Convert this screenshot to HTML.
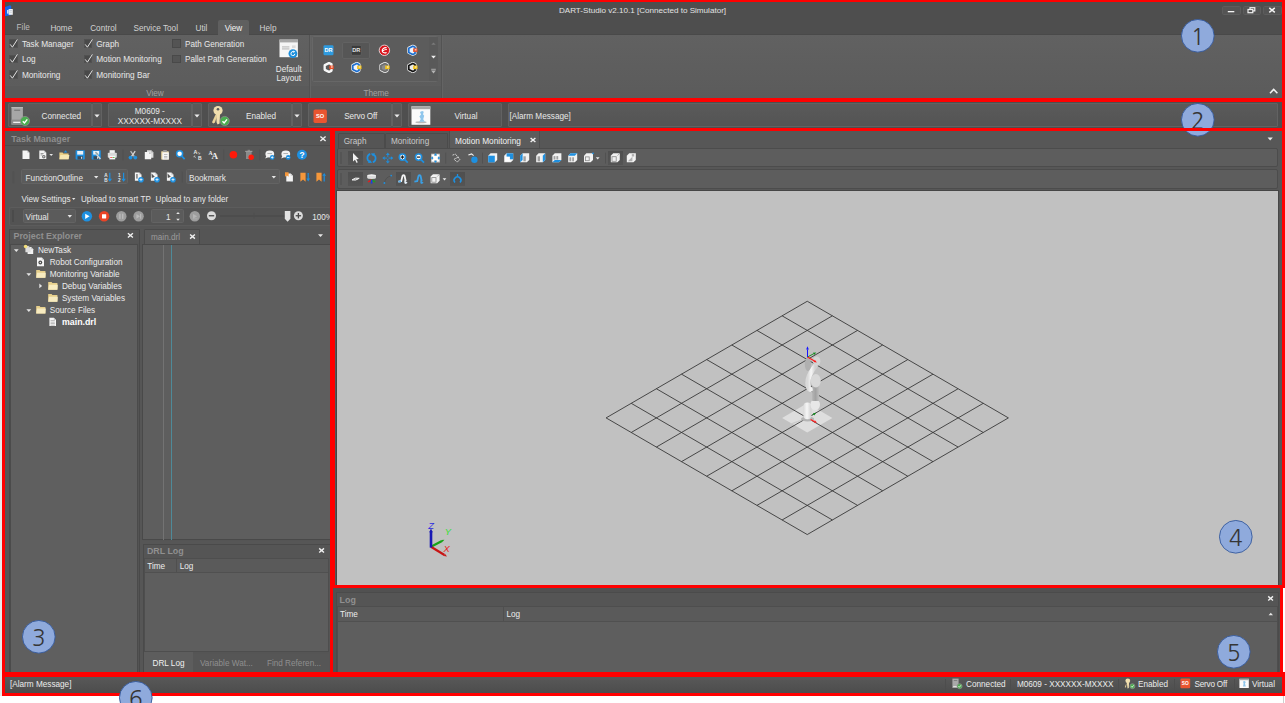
<!DOCTYPE html>
<html><head><meta charset="utf-8"><title>DART-Studio</title>
<style>
html,body{margin:0;padding:0;}
body{width:1285px;height:703px;overflow:hidden;background:#fff;position:relative;font-family:"Liberation Sans",Arial,sans-serif;}
#app{position:absolute;left:0;top:0;width:1285px;height:703px;overflow:hidden;}
#app div,#app svg{position:absolute;}
.t{white-space:nowrap;}
.red{background:#ff0000;}
</style></head><body><div id="app">
<div style="left:0px;top:0px;width:2px;height:703px;background:#e6eaea;"></div>
<div style="left:2px;top:0px;width:1283px;height:696px;background:#575757;"></div>
<div style="left:2px;top:0px;width:1283px;height:34.5px;background:#4e4e4e;"></div>
<div style="left:2px;top:34.5px;width:1283px;height:64px;background:linear-gradient(#616161,#5b5b5b);"></div>
<div style="left:2px;top:33.5px;width:1283px;height:1px;background:#494949;"></div>
<div style="left:218px;top:19.5px;width:31px;height:15px;background:#5f5f5f;border-radius:2px 2px 0 0;"></div>
<div style="left:5px;top:85px;width:437px;height:13px;background:#5a5a5a;"></div>
<div style="left:5px;top:85px;width:437px;height:1px;background:#5d5d5d;"></div>
<svg style="left:4px;top:4px;" width="12" height="13" viewBox="0 0 12 13"><path d="M1 3 L6 1.2 L7.2 2 L7.2 11 L1 12.2 Z" fill="#1565e8"/><rect x="4.6" y="5" width="4.2" height="5.8" fill="#f2f2f2"/><rect x="3.2" y="6" width="1.2" height="3.6" fill="#fff"/><rect x="5.5" y="6.2" width="2.4" height="0.7" fill="#b9c3d4"/><rect x="5.5" y="7.8" width="2.4" height="0.7" fill="#b9c3d4"/></svg>
<div class="t" style="top:4.50px;font-size:8.1px;line-height:12px;color:#e2e2e2;left:442.5px;width:400px;text-align:center;">DART-Studio v2.10.1 [Connected to Simulator]</div>
<div style="left:1222px;top:5.5px;width:18.5px;height:9.5px;background:#545454;border:1px solid #5d5d5d;box-sizing:border-box;border-radius:1.5px;"></div>
<div style="left:1242.5px;top:5.5px;width:18.5px;height:9.5px;background:#545454;border:1px solid #5d5d5d;box-sizing:border-box;border-radius:1.5px;"></div>
<div style="left:1263px;top:5.5px;width:18.5px;height:9.5px;background:#545454;border:1px solid #5d5d5d;box-sizing:border-box;border-radius:1.5px;"></div>
<svg style="left:1222px;top:5px;" width="62" height="11" viewBox="0 0 62 11"><rect x="5.8" y="6" width="6.5" height="1.3" fill="#f4f4f4"/><rect x="28" y="2.7" width="4.8" height="3.2" fill="none" stroke="#f0f0f0" stroke-width="1.2"/><rect x="26" y="4.5" width="4.8" height="3.2" fill="#545454" stroke="#f0f0f0" stroke-width="1.2"/><path d="M47.3 2.8 L52.8 7.4 M52.8 2.8 L47.3 7.4" stroke="#f4f4f4" stroke-width="1.5"/></svg>
<div class="t" style="top:21.70px;font-size:8.2px;line-height:12px;color:#bcbcbc;left:16.6px;">File</div>
<div class="t" style="top:22.80px;font-size:8.2px;line-height:12px;color:#d2d2d2;left:50.4px;">Home</div>
<div class="t" style="top:22.80px;font-size:8.2px;line-height:12px;color:#d2d2d2;left:90.2px;">Control</div>
<div class="t" style="top:22.80px;font-size:8.2px;line-height:12px;color:#d2d2d2;left:133.5px;">Service Tool</div>
<div class="t" style="top:22.80px;font-size:8.2px;line-height:12px;color:#d2d2d2;left:195.6px;">Util</div>
<div class="t" style="top:22.80px;font-size:8.2px;line-height:12px;color:#f4f4f4;left:224.7px;">View</div>
<div class="t" style="top:22.80px;font-size:8.2px;line-height:12px;color:#d2d2d2;left:259.6px;">Help</div>
<div style="left:9px;top:39.4px;width:8.6px;height:8.8px;background:#494949;border:1px solid #515151;box-sizing:border-box;"></div>
<svg style="left:8px;top:37.9px;" width="12" height="12" viewBox="0 0 12 12"><path d="M2.2 6.4 L4.4 9.2 L9.4 1.4" fill="none" stroke="#e0e0e0" stroke-width="1.0"/></svg>
<div class="t" style="top:39.10px;font-size:8.25px;line-height:12px;color:#e8e8e8;left:21.9px;">Task Manager</div>
<div style="left:9px;top:54.7px;width:8.6px;height:8.8px;background:#494949;border:1px solid #515151;box-sizing:border-box;"></div>
<svg style="left:8px;top:53.2px;" width="12" height="12" viewBox="0 0 12 12"><path d="M2.2 6.4 L4.4 9.2 L9.4 1.4" fill="none" stroke="#e0e0e0" stroke-width="1.0"/></svg>
<div class="t" style="top:54.40px;font-size:8.25px;line-height:12px;color:#e8e8e8;left:21.9px;">Log</div>
<div style="left:9px;top:70.2px;width:8.6px;height:8.8px;background:#494949;border:1px solid #515151;box-sizing:border-box;"></div>
<svg style="left:8px;top:68.7px;" width="12" height="12" viewBox="0 0 12 12"><path d="M2.2 6.4 L4.4 9.2 L9.4 1.4" fill="none" stroke="#e0e0e0" stroke-width="1.0"/></svg>
<div class="t" style="top:69.90px;font-size:8.25px;line-height:12px;color:#e8e8e8;left:21.9px;">Monitoring</div>
<div style="left:83.5px;top:39.4px;width:8.6px;height:8.8px;background:#494949;border:1px solid #515151;box-sizing:border-box;"></div>
<svg style="left:82.5px;top:37.9px;" width="12" height="12" viewBox="0 0 12 12"><path d="M2.2 6.4 L4.4 9.2 L9.4 1.4" fill="none" stroke="#e0e0e0" stroke-width="1.0"/></svg>
<div class="t" style="top:39.10px;font-size:8.25px;line-height:12px;color:#e8e8e8;left:96.2px;">Graph</div>
<div style="left:83.5px;top:54.7px;width:8.6px;height:8.8px;background:#494949;border:1px solid #515151;box-sizing:border-box;"></div>
<svg style="left:82.5px;top:53.2px;" width="12" height="12" viewBox="0 0 12 12"><path d="M2.2 6.4 L4.4 9.2 L9.4 1.4" fill="none" stroke="#e0e0e0" stroke-width="1.0"/></svg>
<div class="t" style="top:54.40px;font-size:8.25px;line-height:12px;color:#e8e8e8;left:96.2px;">Motion Monitoring</div>
<div style="left:83.5px;top:70.2px;width:8.6px;height:8.8px;background:#494949;border:1px solid #515151;box-sizing:border-box;"></div>
<svg style="left:82.5px;top:68.7px;" width="12" height="12" viewBox="0 0 12 12"><path d="M2.2 6.4 L4.4 9.2 L9.4 1.4" fill="none" stroke="#e0e0e0" stroke-width="1.0"/></svg>
<div class="t" style="top:69.90px;font-size:8.25px;line-height:12px;color:#e8e8e8;left:96.2px;">Monitoring Bar</div>
<div style="left:172.3px;top:39.4px;width:8.6px;height:8.8px;background:#545454;border:1px solid #494949;box-sizing:border-box;"></div>
<div class="t" style="top:39.10px;font-size:8.15px;line-height:12px;color:#e8e8e8;left:185px;">Path Generation</div>
<div style="left:172.3px;top:54.7px;width:8.6px;height:8.8px;background:#545454;border:1px solid #494949;box-sizing:border-box;"></div>
<div class="t" style="top:54.40px;font-size:8.15px;line-height:12px;color:#e8e8e8;left:185px;">Pallet Path Generation</div>
<svg style="left:279px;top:39px;" width="20" height="20" viewBox="0 0 20 20"><rect x="0.5" y="0.6" width="18.4" height="17.6" fill="#f6f6f6"/><rect x="0.5" y="0.6" width="18.4" height="2.8" fill="#a8a8a8"/><rect x="3" y="7.6" width="7.4" height="0.7" fill="#9a9a9a"/><rect x="3" y="9.6" width="7.4" height="0.7" fill="#9a9a9a"/><rect x="13" y="6.4" width="3.6" height="2.6" fill="#dcdcdc"/><circle cx="13.9" cy="14.6" r="4.4" fill="#1b8fdd"/><path d="M15.9 14.8 A2 2 0 1 1 14.6 12.7" fill="none" stroke="#fff" stroke-width="1"/><path d="M14.2 11.6 L16.2 12.6 L14.4 14 Z" fill="#fff"/></svg>
<div class="t" style="top:63.80px;font-size:8.2px;line-height:12px;color:#e8e8e8;left:258.8px;width:60px;text-align:center;">Default</div>
<div class="t" style="top:73.10px;font-size:8.2px;line-height:12px;color:#e8e8e8;left:258.8px;width:60px;text-align:center;">Layout</div>
<div class="t" style="top:88.30px;font-size:8.2px;line-height:12px;color:#a2a2a2;left:125.0px;width:60px;text-align:center;">View</div>
<div class="t" style="top:88.30px;font-size:8.2px;line-height:12px;color:#a2a2a2;left:346.2px;width:60px;text-align:center;">Theme</div>
<div style="left:309px;top:35px;width:1px;height:63px;background:#535353;"></div>
<div style="left:310px;top:35px;width:1px;height:63px;background:#646464;"></div>
<div style="left:441px;top:35px;width:1px;height:63px;background:#535353;"></div>
<div style="left:442px;top:35px;width:1px;height:63px;background:#646464;"></div>
<div style="left:312px;top:36px;width:126px;height:45.5px;background:#5c5c5c;border:1px solid #676767;box-sizing:border-box;border-radius:1.5px;"></div>
<div style="left:428.5px;top:37px;width:9px;height:43.5px;background:#595959;"></div>
<div style="left:342.3px;top:41.5px;width:27.7px;height:17px;background:#565656;border:1px solid #626262;box-sizing:border-box;border-radius:2px;"></div>
<svg style="left:428.5px;top:37px;" width="9" height="44" viewBox="0 0 9 44"><path d="M2.3 7.8 L4.5 5.4 L6.7 7.8 Z" fill="#7a7a7a"/><path d="M2.1 18.8 L6.9 18.8 L4.5 21.6 Z" fill="#ededed"/><rect x="2.2" y="31.8" width="4.6" height="0.9" fill="#b4b4b4"/><path d="M2.1 33.4 L6.9 33.4 L4.5 36.4 Z" fill="#b4b4b4"/></svg>
<svg style="left:0px;top:0px;" width="450" height="98" viewBox="0 0 450 98"><rect x="323.5" y="45.3" width="10" height="10" rx="1.2" fill="#2e9be0"/><text x="328.5" y="52.4" font-size="5.6" font-weight="700" text-anchor="middle" fill="#fff" font-family='"Liberation Sans", Arial, sans-serif'>DR</text><rect x="351.3" y="45.3" width="10" height="10" rx="1.2" fill="#3b3b3b" stroke="#6a6a6a" stroke-width="0.6"/><text x="356.3" y="52.4" font-size="5.6" font-weight="700" text-anchor="middle" fill="#e6e6e6" font-family='"Liberation Sans", Arial, sans-serif'>DR</text><circle cx="384.4" cy="50.3" r="5.2" fill="#d9121a" stroke="#f3f3f3" stroke-width="0.8"/><path d="M386.6 47.6 C383.2 47.4 381.6 49.8 382.4 51.6 C383 53 385 53.2 386.6 52.4 M382.6 51 C384 50 385.6 49.4 386.8 49.6" fill="none" stroke="#fff" stroke-width="1.1"/><path d="M408.8 48.199999999999996 L412.8 46.199999999999996 L415.0 47.199999999999996 L415.0 53.4 L412.8 54.4 L408.8 52.4 Z" fill="none" stroke="#f6f6f6" stroke-width="3" stroke-linejoin="round"/><path d="M408.8 48.199999999999996 L412.8 46.199999999999996 L415.0 47.199999999999996 L415.0 53.4 L412.8 54.4 L408.8 52.4 Z" fill="#eef3fc" stroke="#1c6ecf" stroke-width="1.7" stroke-linejoin="round"/><rect x="413.1" y="48.4" width="4.4" height="3.5" fill="#e8502a"/><rect x="414.8" y="49.199999999999996" width="1.7" height="1.2" fill="#fff" opacity="0.8"/><path d="M325.0 65.4 L329.0 63.4 L331.2 64.4 L331.2 70.6 L329.0 71.6 L325.0 69.6 Z" fill="none" stroke="#f6f6f6" stroke-width="3" stroke-linejoin="round"/><path d="M325.0 65.4 L329.0 63.4 L331.2 64.4 L331.2 70.6 L329.0 71.6 L325.0 69.6 Z" fill="#5b5b5b" stroke="#f6f6f6" stroke-width="1.7" stroke-linejoin="round"/><rect x="329.3" y="65.6" width="4.4" height="3.5" fill="#e8502a"/><rect x="331.0" y="66.4" width="1.7" height="1.2" fill="#fff" opacity="0.8"/><path d="M352.8 65.4 L356.8 63.4 L359.0 64.4 L359.0 70.6 L356.8 71.6 L352.8 69.6 Z" fill="none" stroke="#f6f6f6" stroke-width="3" stroke-linejoin="round"/><path d="M352.8 65.4 L356.8 63.4 L359.0 64.4 L359.0 70.6 L356.8 71.6 L352.8 69.6 Z" fill="#eef3fc" stroke="#1c6ecf" stroke-width="1.7" stroke-linejoin="round"/><rect x="357.1" y="65.6" width="4.4" height="3.5" fill="#f2c21a"/><rect x="358.8" y="66.4" width="1.7" height="1.2" fill="#fff" opacity="0.8"/><path d="M380.9 65.4 L384.9 63.4 L387.09999999999997 64.4 L387.09999999999997 70.6 L384.9 71.6 L380.9 69.6 Z" fill="none" stroke="#f6f6f6" stroke-width="3" stroke-linejoin="round"/><path d="M380.9 65.4 L384.9 63.4 L387.09999999999997 64.4 L387.09999999999997 70.6 L384.9 71.6 L380.9 69.6 Z" fill="#8a8a8a" stroke="#6e6e6e" stroke-width="1.7" stroke-linejoin="round"/><rect x="385.2" y="65.6" width="4.4" height="3.5" fill="#f2c21a"/><rect x="386.9" y="66.4" width="1.7" height="1.2" fill="#fff" opacity="0.8"/><path d="M408.8 65.4 L412.8 63.4 L415.0 64.4 L415.0 70.6 L412.8 71.6 L408.8 69.6 Z" fill="none" stroke="#f6f6f6" stroke-width="3" stroke-linejoin="round"/><path d="M408.8 65.4 L412.8 63.4 L415.0 64.4 L415.0 70.6 L412.8 71.6 L408.8 69.6 Z" fill="#e8e8e8" stroke="#121212" stroke-width="1.7" stroke-linejoin="round"/><rect x="413.1" y="65.6" width="4.4" height="3.5" fill="#f2c21a"/><rect x="414.8" y="66.4" width="1.7" height="1.2" fill="#fff" opacity="0.8"/></svg>
<svg style="left:1268px;top:86px;" width="12" height="10" viewBox="0 0 12 10"><path d="M2 7.2 L5.7 3.4 L9.4 7.2" fill="none" stroke="#f2f2f2" stroke-width="1.5"/></svg>
<div style="left:2px;top:100px;width:1283px;height:30px;background:#4f4f4f;"></div>
<div style="left:7.7px;top:103.1px;width:84.3px;height:24.3px;background:linear-gradient(#5a5a5a,#545454);border:1px solid #626262;box-sizing:border-box;border-radius:1px;"></div>
<div style="left:92.3px;top:103.1px;width:10.2px;height:24.3px;background:linear-gradient(#5a5a5a,#545454);border:1px solid #626262;box-sizing:border-box;border-radius:1px;"></div>
<svg style="left:92px;top:103.7px;" width="10" height="23.4" viewBox="0 0 10 23.4"><path d="M2.4 10.4 L7.6 10.4 L5 13.4 Z" fill="#ececec"/></svg>
<div style="left:107.7px;top:103.1px;width:84.3px;height:24.3px;background:linear-gradient(#5a5a5a,#545454);border:1px solid #626262;box-sizing:border-box;border-radius:1px;"></div>
<div style="left:192.3px;top:103.1px;width:10.2px;height:24.3px;background:linear-gradient(#5a5a5a,#545454);border:1px solid #626262;box-sizing:border-box;border-radius:1px;"></div>
<svg style="left:192px;top:103.7px;" width="10" height="23.4" viewBox="0 0 10 23.4"><path d="M2.4 10.4 L7.6 10.4 L5 13.4 Z" fill="#ececec"/></svg>
<div style="left:207.7px;top:103.1px;width:84.30000000000001px;height:24.3px;background:linear-gradient(#5a5a5a,#545454);border:1px solid #626262;box-sizing:border-box;border-radius:1px;"></div>
<div style="left:292.3px;top:103.1px;width:10.2px;height:24.3px;background:linear-gradient(#5a5a5a,#545454);border:1px solid #626262;box-sizing:border-box;border-radius:1px;"></div>
<svg style="left:292px;top:103.7px;" width="10" height="23.4" viewBox="0 0 10 23.4"><path d="M2.4 10.4 L7.6 10.4 L5 13.4 Z" fill="#ececec"/></svg>
<div style="left:307.7px;top:103.1px;width:84.30000000000001px;height:24.3px;background:linear-gradient(#5a5a5a,#545454);border:1px solid #626262;box-sizing:border-box;border-radius:1px;"></div>
<div style="left:392.3px;top:103.1px;width:10.2px;height:24.3px;background:linear-gradient(#5a5a5a,#545454);border:1px solid #626262;box-sizing:border-box;border-radius:1px;"></div>
<svg style="left:392px;top:103.7px;" width="10" height="23.4" viewBox="0 0 10 23.4"><path d="M2.4 10.4 L7.6 10.4 L5 13.4 Z" fill="#ececec"/></svg>
<div style="left:407.7px;top:103.1px;width:94.30000000000001px;height:24.3px;background:linear-gradient(#5a5a5a,#545454);border:1px solid #626262;box-sizing:border-box;border-radius:1px;"></div>
<div style="left:507.5px;top:103.1px;width:770.5px;height:24.3px;background:linear-gradient(#5a5a5a,#545454);border:1px solid #626262;box-sizing:border-box;border-radius:1px;"></div>
<svg style="left:8px;top:104px;" width="26" height="24" viewBox="0 0 26 24"><path d="M3.5 3 L14.9 3 L14.9 20.6 L3.5 20.6 Z" fill="#a7a7a7"/><rect x="3.5" y="3" width="11.4" height="1.2" fill="#b8b8b8"/><rect x="6.2" y="5.6" width="6" height="1.3" fill="#7c7c7c"/><rect x="3.5" y="15.6" width="11.4" height="5" fill="#8c8c8c"/><rect x="5.2" y="17.7" width="8" height="1.3" fill="#f0f0f0"/><circle cx="17" cy="17" r="4.6" fill="#4aae4f" stroke="#8f8f8f" stroke-width="0.7"/><path d="M14.792 17.23 L16.448 18.932 L19.3 15.344" fill="none" stroke="#fff" stroke-width="1.38"/></svg>
<div class="t" style="top:110.90px;font-size:8.2px;line-height:12px;color:#e8e8e8;left:26.299999999999997px;width:70px;text-align:center;">Connected</div>
<div class="t" style="top:106.00px;font-size:8.2px;line-height:12px;color:#e8e8e8;left:104.80000000000001px;width:90px;text-align:center;">M0609 -</div>
<div class="t" style="top:116.10px;font-size:8.2px;line-height:12px;color:#e8e8e8;left:104.80000000000001px;width:90px;text-align:center;">XXXXXX-MXXXX</div>
<svg style="left:208px;top:104px;" width="26" height="24" viewBox="0 0 26 24"><circle cx="10" cy="6.6" r="4.6" fill="#f1dfae"/><circle cx="10" cy="5.2" r="1.3" fill="#5a5a5a"/><path d="M8 10 L12 10 L11.6 19.6 L9.6 20.4 L8.6 18.6 Z" fill="#f1dfae"/><path d="M7.6 10.4 L4 18.2 L5.4 19.4 L7 18.4 L9 12 Z" fill="#e9d39a"/><circle cx="16.7" cy="17" r="4.6" fill="#4aae4f" stroke="#8f8f8f" stroke-width="0.7"/><path d="M14.491999999999999 17.23 L16.148 18.932 L19.0 15.344" fill="none" stroke="#fff" stroke-width="1.38"/></svg>
<div class="t" style="top:110.90px;font-size:8.2px;line-height:12px;color:#e8e8e8;left:226.0px;width:70px;text-align:center;">Enabled</div>
<svg style="left:313px;top:108.5px;" width="15" height="15" viewBox="0 0 15 15"><rect x="0.5" y="0.5" width="13.4" height="13.4" rx="1.6" fill="#ea5530"/><text x="7.2" y="9.1" font-size="5.7" font-weight="700" text-anchor="middle" fill="#fff" font-family='"Liberation Sans", Arial, sans-serif'>SO</text></svg>
<div class="t" style="top:110.90px;font-size:8.2px;line-height:12px;color:#e8e8e8;left:325.7px;width:70px;text-align:center;letter-spacing:-0.2px;">Servo Off</div>
<svg style="left:410.5px;top:106px;" width="20" height="20" viewBox="0 0 20 20"><rect x="0.5" y="0.3" width="18.8" height="18.5" fill="#fbfbfb"/><rect x="0.5" y="0.3" width="18.8" height="2.9" fill="#a6a6a6"/><ellipse cx="10" cy="16.2" rx="5.6" ry="1" fill="#b9b9b9"/><path d="M9 6 l2.2 -1 l1.6 0.8 l-0.8 2.4 l1.2 1.6 l-1 3.4 l1.6 2.6 l-5.6 0 l1.6 -2.8 l-1.4 -2.6 l1.6 -2 Z" fill="#8fc6ec"/></svg>
<div class="t" style="top:110.90px;font-size:8.2px;line-height:12px;color:#e8e8e8;left:431.0px;width:70px;text-align:center;">Virtual</div>
<div class="t" style="top:110.90px;font-size:8.2px;line-height:12px;color:#e8e8e8;left:509.4px;">[Alarm Message]</div>
<div style="left:2px;top:130px;width:330px;height:543px;background:#565656;"></div>
<div style="left:5px;top:131px;width:326px;height:14px;background:#555555;"></div>
<div class="t" style="top:133.10px;font-size:8.95px;line-height:12px;color:#8e8e8e;left:11.2px;font-weight:700;">Task Manager</div>
<svg style="left:316px;top:132px;" width="14" height="14" viewBox="0 0 14 14"><path d="M4.4 4.59 L9.6 9.01 M9.6 4.59 L4.4 9.01" stroke="#f0f0f0" stroke-width="1.4"/></svg>
<div style="left:5px;top:144.5px;width:326px;height:1px;background:#4c4c4c;"></div>
<div style="left:20.6px;top:169.4px;width:107.6px;height:14.2px;background:#5b5b5b;border:1px solid #636363;box-sizing:border-box;border-radius:1.5px;"></div>
<div style="left:186px;top:169.4px;width:93.6px;height:14.2px;background:#5b5b5b;border:1px solid #636363;box-sizing:border-box;border-radius:1.5px;"></div>
<div class="t" style="top:172.70px;font-size:8.2px;line-height:12px;color:#e8e8e8;left:25.6px;">FunctionOutline</div>
<div class="t" style="top:172.70px;font-size:8.2px;line-height:12px;color:#e8e8e8;left:189px;">Bookmark</div>
<div class="t" style="top:193.60px;font-size:8.15px;line-height:12px;color:#e8e8e8;left:21.5px;">View Settings</div>
<div class="t" style="top:193.60px;font-size:8.15px;line-height:12px;color:#e8e8e8;left:81px;">Upload to smart TP</div>
<div class="t" style="top:193.60px;font-size:8.15px;line-height:12px;color:#e8e8e8;left:155.6px;">Upload to any folder</div>
<div style="left:8.5px;top:207px;width:322.5px;height:18.5px;background:#535353;border:1px solid #5c5c5c;box-sizing:border-box;border-radius:2px;border-right:none;"></div>
<div style="left:12.4px;top:210.3px;width:1.6px;height:12px;background:#4b4b4b;"></div>
<div style="left:22.5px;top:209.2px;width:53.2px;height:14px;background:#5b5b5b;border:1px solid #636363;box-sizing:border-box;border-radius:1.5px;"></div>
<div class="t" style="top:212.00px;font-size:8.2px;line-height:12px;color:#e8e8e8;left:25.6px;">Virtual</div>
<div style="left:150.6px;top:209.2px;width:33px;height:14px;background:#5b5b5b;border:1px solid #636363;box-sizing:border-box;border-radius:1.5px;"></div>
<div class="t" style="top:212.00px;font-size:8.2px;line-height:12px;color:#e8e8e8;left:150.6px;width:20px;text-align:right;">1</div>
<div class="t" style="top:212.00px;font-size:8.2px;line-height:12px;color:#e8e8e8;left:312.2px;">100%</div>
<div style="left:8.7px;top:228.5px;width:131.3px;height:445px;background:#545454;border:1px solid #494949;box-sizing:border-box;"></div>
<div style="left:9.7px;top:229.5px;width:129.3px;height:13.5px;background:#555555;"></div>
<div class="t" style="top:230.00px;font-size:8.9px;line-height:12px;color:#909090;left:13.5px;font-weight:700;">Project Explorer</div>
<div style="left:9.7px;top:243.6px;width:128.3px;height:430px;background:#5f5f5f;border:1px solid #4b4b4b;box-sizing:border-box;"></div>
<div class="t" style="top:244.90px;font-size:8.2px;line-height:12px;color:#ececec;left:37.9px;">NewTask</div>
<div class="t" style="top:256.90px;font-size:8.2px;line-height:12px;color:#ececec;left:49.7px;">Robot Configuration</div>
<div class="t" style="top:268.90px;font-size:8.2px;line-height:12px;color:#ececec;left:49.7px;">Monitoring Variable</div>
<div class="t" style="top:280.90px;font-size:8.2px;line-height:12px;color:#ececec;left:61.9px;">Debug Variables</div>
<div class="t" style="top:292.90px;font-size:8.2px;line-height:12px;color:#ececec;left:61.9px;">System Variables</div>
<div class="t" style="top:304.80px;font-size:8.2px;line-height:12px;color:#ececec;left:49.7px;">Source Files</div>
<div class="t" style="top:316.00px;font-size:8.8px;line-height:12px;color:#ffffff;left:62px;font-weight:700;">main.drl</div>
<div style="left:142.5px;top:228.5px;width:188.5px;height:312px;background:#555555;"></div>
<div style="left:144.4px;top:229px;width:55.6px;height:16px;background:#5a5a5a;border:1px solid #4a4a4a;box-sizing:border-box;border-bottom:none;border-radius:1.5px 1.5px 0 0;"></div>
<div class="t" style="top:231.90px;font-size:8.2px;line-height:12px;color:#9a9a9a;left:151px;">main.drl</div>
<div style="left:142.1px;top:244.4px;width:188.9px;height:296px;background:#5e5e5e;border:1px solid #494949;box-sizing:border-box;border-right:none;"></div>
<div style="left:163.2px;top:245.4px;width:1px;height:294.4px;background:#737373;"></div>
<div style="left:171px;top:245.4px;width:1px;height:294.4px;background:#4f8a99;"></div>
<div style="left:142.5px;top:543.6px;width:188.5px;height:129.4px;background:#555555;border:1px solid #4a4a4a;box-sizing:border-box;border-right:none;"></div>
<div class="t" style="top:545.20px;font-size:8.9px;line-height:12px;color:#909090;left:146.9px;font-weight:700;">DRL Log</div>
<div style="left:144.4px;top:558px;width:184.6px;height:94px;background:#5e5e5e;border:1px solid #4e4e4e;box-sizing:border-box;"></div>
<div style="left:145.4px;top:559px;width:182.6px;height:13px;background:#5a5a5a;"></div>
<div style="left:145.4px;top:572px;width:182.6px;height:1px;background:#505050;"></div>
<div style="left:176px;top:559px;width:1px;height:13px;background:#4f4f4f;"></div>
<div class="t" style="top:560.50px;font-size:8.2px;line-height:12px;color:#ececec;left:147.2px;">Time</div>
<div class="t" style="top:560.50px;font-size:8.2px;line-height:12px;color:#ececec;left:179.7px;">Log</div>
<div style="left:144.4px;top:652px;width:48.8px;height:21px;background:#5d5d5d;"></div>
<div style="left:193.2px;top:653.5px;width:136px;height:19px;background:#565656;"></div>
<div class="t" style="top:657.60px;font-size:8.2px;line-height:12px;color:#f0f0f0;left:152.5px;">DRL Log</div>
<div class="t" style="top:657.60px;font-size:8.2px;line-height:12px;color:#8f8f8f;left:200px;">Variable Wat...</div>
<div class="t" style="top:657.60px;font-size:8.2px;line-height:12px;color:#8f8f8f;left:266.9px;">Find Referen...</div>
<svg style="left:0px;top:130px;" width="335" height="545" viewBox="0 130 335 545"><path d="M22.5 150.5 L27.3 150.5 L29.5 152.7 L29.5 159.1 L22.5 159.1 Z" fill="#f4f4f4"/><path d="M27.3 150.5 L27.3 152.7 L29.5 152.7 Z" fill="#c9c9c9"/><path d="M39.3 150.5 L44.099999999999994 150.5 L46.3 152.7 L46.3 159.1 L39.3 159.1 Z" fill="#f4f4f4"/><path d="M44.099999999999994 150.5 L44.099999999999994 152.7 L46.3 152.7 Z" fill="#c9c9c9"/><circle cx="43.8" cy="156.8" r="1.7" fill="#6d6d6d"/><circle cx="43.8" cy="156.8" r="0.7" fill="#ddd"/><rect x="40.6" y="153.20000000000002" width="3" height="0.7" fill="#777"/><rect x="40.6" y="154.60000000000002" width="2" height="0.7" fill="#777"/><path d="M49.4 154.0 L53 154.0 L51.2 156.0 Z" fill="#e8e8e8"/><path d="M59.4 152.4 L62.6 152.4 L63.4 153.4 L68.6 153.4 L68.6 159.20000000000002 L59.4 159.20000000000002 Z" fill="#e9cf86"/><path d="M60.4 155.0 L69.4 155.0 L68.6 159.20000000000002 L59.4 159.20000000000002 Z" fill="#f6e6b2"/><path d="M63.6 152.60000000000002 L65.8 150.20000000000002 L67.2 152.60000000000002 Z" fill="#1e90e0"/><rect x="75.60000000000001" y="150.20000000000002" width="9.2" height="9.2" rx="0.6" fill="#1e90e0"/><rect x="77.2" y="151.00000000000003" width="6" height="3.6" fill="#e9f1f8"/><rect x="77.50000000000001" y="156.20000000000002" width="5.4" height="3.2" fill="#3c4a57"/><rect x="81.00000000000001" y="156.8" width="1.2" height="2" fill="#cfd8df"/><rect x="91.60000000000001" y="150.20000000000002" width="9.2" height="9.2" rx="0.6" fill="#1e90e0"/><rect x="93.2" y="151.00000000000003" width="6" height="3.6" fill="#e9f1f8"/><rect x="93.50000000000001" y="156.20000000000002" width="5.4" height="3.2" fill="#3c4a57"/><rect x="97.00000000000001" y="156.8" width="1.2" height="2" fill="#cfd8df"/><path d="M96.4 154.20000000000002 L100.4 159.0" stroke="#d8d8d8" stroke-width="1.4"/><path d="M95.4 152.20000000000002 L98 154.60000000000002" stroke="#9aa" stroke-width="1.6"/><rect x="109.6" y="150.20000000000002" width="5.2" height="3" fill="#f4f4f4"/><rect x="107.8" y="152.8" width="9" height="5" rx="0.8" fill="#d9d9d9"/><rect x="109.4" y="155.8" width="5.8" height="3.6" fill="#fafafa"/><rect x="110.2" y="157.0" width="2.4" height="0.8" fill="#e44"/><rect x="112.8" y="157.0" width="1.8" height="0.8" fill="#3b3"/><rect x="122.6" y="149.3" width="0.8" height="11" fill="#4f4f4f"/><path d="M130.6 151.20000000000002 L134.6 156.8" stroke="#bdbdbd" stroke-width="1.3"/><path d="M135.2 151.20000000000002 L131.2 156.8" stroke="#d6d6d6" stroke-width="1.3"/><circle cx="130.5" cy="157.60000000000002" r="1.9" fill="#1e90e0"/><circle cx="135.3" cy="157.60000000000002" r="1.9" fill="#1e90e0"/><path d="M147.0 150.3 L151.20000000000002 150.3 L153.4 152.5 L153.4 157.70000000000002 L147.0 157.70000000000002 Z" fill="#dcdcdc"/><path d="M151.20000000000002 150.3 L151.20000000000002 152.5 L153.4 152.5 Z" fill="#b5b5b5"/><path d="M144.8 151.90000000000003 L149.00000000000003 151.90000000000003 L151.20000000000002 154.10000000000002 L151.20000000000002 159.30000000000004 L144.8 159.30000000000004 Z" fill="#f6f6f6"/><path d="M149.00000000000003 151.90000000000003 L149.00000000000003 154.10000000000002 L151.20000000000002 154.10000000000002 Z" fill="#c4c4c4"/><rect x="161.2" y="151.20000000000002" width="7.6" height="8.4" rx="0.6" fill="#e7d5a0"/><rect x="163.2" y="150.0" width="3.6" height="2" fill="#9a9a9a"/><rect x="162.4" y="152.4" width="6.4" height="7.2" fill="#f5f5f5"/><rect x="164" y="154.4" width="3.4" height="0.6" fill="#999"/><rect x="164" y="156.0" width="3.4" height="0.6" fill="#999"/><rect x="164" y="157.60000000000002" width="3.4" height="0.6" fill="#999"/><circle cx="179.6" cy="153.8" r="3" fill="#fff" stroke="#1e90e0" stroke-width="1.5"/><path d="M181.8 156.20000000000002 L184.6 159.20000000000002" stroke="#1e90e0" stroke-width="1.7"/><text x="193.4" y="154.4" font-size="5.4" font-weight="700" fill="#e8e8e8" font-family='"Liberation Sans", Arial, sans-serif'>A</text><text x="198" y="159.60000000000002" font-size="5" font-weight="700" fill="#e8e8e8" font-family='"Liberation Sans", Arial, sans-serif'>B</text><path d="M197.6 151.8 l2.2 2.2 m0 0 l-1.4 0 m1.4 0 l0 -1.4" stroke="#bdbdbd" stroke-width="0.7" fill="none"/><path d="M196 158.20000000000002 l-2 -2.2 m0 0 l1.4 0 m-1.4 0 l0 1.4" stroke="#bdbdbd" stroke-width="0.7" fill="none"/><text x="208.6" y="155.0" font-size="5.6" font-weight="700" fill="#f0f0f0" font-family="Liberation Serif,serif">A</text><text x="211.4" y="159.4" font-size="9" font-weight="700" fill="#f0f0f0" font-family="Liberation Serif,serif">A</text><rect x="223.4" y="149.3" width="0.8" height="11" fill="#4f4f4f"/><circle cx="233.4" cy="154.8" r="3.8" fill="#ff1a0a"/><rect x="246" y="151.8" width="5.6" height="7.2" fill="#8a8a8a"/><rect x="245.2" y="150.8" width="7.2" height="1.2" fill="#9a9a9a"/><rect x="247.6" y="149.8" width="2.4" height="1.2" fill="#8a8a8a"/><circle cx="251.2" cy="157.20000000000002" r="2.7" fill="#ff1a0a"/><rect x="259.4" y="149.3" width="0.8" height="11" fill="#4f4f4f"/><ellipse cx="269.8" cy="154.0" rx="4.4" ry="3.4" fill="#f2f2f2"/><path d="M266.40000000000003 155.8 L265.2 158.4 L268.8 157.0 Z" fill="#f2f2f2"/><rect x="267.40000000000003" y="153.20000000000002" width="4.6" height="0.6" fill="#8a8a8a"/><circle cx="272.2" cy="157.4" r="2.3" fill="#1e90e0"/><rect x="270.935" y="157.05" width="2.53" height="0.7" fill="#fff"/><rect x="271.84999999999997" y="156.13500000000002" width="0.7" height="2.53" fill="#fff"/><ellipse cx="285.8" cy="154.0" rx="4.4" ry="3.4" fill="#f2f2f2"/><path d="M282.40000000000003 155.8 L281.2 158.4 L284.8 157.0 Z" fill="#f2f2f2"/><rect x="283.40000000000003" y="153.20000000000002" width="4.6" height="0.6" fill="#8a8a8a"/><circle cx="288.2" cy="157.4" r="2.3" fill="#1e90e0"/><rect x="286.935" y="157.05" width="2.53" height="0.7" fill="#fff"/><circle cx="302" cy="154.8" r="5" fill="#1e90e0"/><text x="302" y="157.8" font-size="8.4" font-weight="700" text-anchor="middle" fill="#fff" font-family='"Liberation Sans", Arial, sans-serif'>?</text><rect x="12.6" y="171.2" width="1.6" height="12" fill="#525252"/><text x="104.2" y="177.0" font-size="4.6" font-weight="700" fill="#e8e8e8" font-family='"Liberation Sans", Arial, sans-serif'>A</text><text x="104.2" y="181.6" font-size="4.6" font-weight="700" fill="#e8e8e8" font-family='"Liberation Sans", Arial, sans-serif'>B</text><path d="M109.8 172.79999999999998 L109.8 180.79999999999998" stroke="#1e90e0" stroke-width="1.2"/><path d="M107.6 178.79999999999998 L109.8 181.79999999999998 L112 178.79999999999998 Z" fill="#1e90e0"/><text x="118.0" y="177.0" font-size="4.6" font-weight="700" fill="#e8e8e8" font-family='"Liberation Sans", Arial, sans-serif'>1</text><text x="118.0" y="181.6" font-size="4.6" font-weight="700" fill="#e8e8e8" font-family='"Liberation Sans", Arial, sans-serif'>2</text><path d="M123.6 172.79999999999998 L123.6 180.79999999999998" stroke="#1e90e0" stroke-width="1.2"/><path d="M121.39999999999999 178.79999999999998 L123.6 181.79999999999998 L125.8 178.79999999999998 Z" fill="#1e90e0"/><path d="M134.89999999999998 172.5 L139.29999999999998 172.5 L141.49999999999997 174.7 L141.49999999999997 180.7 L134.89999999999998 180.7 Z" fill="#f4f4f4"/><path d="M139.29999999999998 172.5 L139.29999999999998 174.7 L141.49999999999997 174.7 Z" fill="#c9c9c9"/><rect x="136.4" y="174.0" width="1.1" height="4.6" fill="#555"/><circle cx="141" cy="179.7" r="2.8" fill="#1e90e0"/><rect x="139.46" y="179.35" width="3.08" height="0.7" fill="#fff"/><rect x="140.65" y="178.16" width="0.7" height="3.08" fill="#fff"/><path d="M150.89999999999998 172.5 L155.29999999999998 172.5 L157.49999999999997 174.7 L157.49999999999997 180.7 L150.89999999999998 180.7 Z" fill="#f4f4f4"/><path d="M155.29999999999998 172.5 L155.29999999999998 174.7 L157.49999999999997 174.7 Z" fill="#c9c9c9"/><path d="M151.4 173.2 L154.8 176.79999999999998 L151.8 178.0 Z" fill="#555"/><circle cx="157" cy="179.7" r="2.8" fill="#1e90e0"/><rect x="155.46" y="179.35" width="3.08" height="0.7" fill="#fff"/><rect x="156.65" y="178.16" width="0.7" height="3.08" fill="#fff"/><path d="M166.89999999999998 172.5 L171.29999999999998 172.5 L173.49999999999997 174.7 L173.49999999999997 180.7 L166.89999999999998 180.7 Z" fill="#f4f4f4"/><path d="M171.29999999999998 172.5 L171.29999999999998 174.7 L173.49999999999997 174.7 Z" fill="#c9c9c9"/><path d="M167.4 173.2 L170.8 176.79999999999998 L167.8 178.0 Z" fill="#555"/><circle cx="173" cy="179.7" r="2.8" fill="#1e90e0"/><rect x="171.46" y="179.35" width="3.08" height="0.7" fill="#fff"/><rect x="172.65" y="178.16" width="0.7" height="3.08" fill="#fff"/><rect x="181.8" y="171.7" width="0.8" height="11" fill="#4f4f4f"/><path d="M286.3 173.6 L290.70000000000005 173.6 L292.90000000000003 175.79999999999998 L292.90000000000003 181.6 L286.3 181.6 Z" fill="#f4f4f4"/><path d="M290.70000000000005 173.6 L290.70000000000005 175.79999999999998 L292.90000000000003 175.79999999999998 Z" fill="#c9c9c9"/><path d="M285 172.2 L288.6 172.2 L288.6 176.79999999999998 L286.8 175.6 L285 176.79999999999998 Z" fill="#f5973a"/><path d="M300.4 172.79999999999998 L305.6 172.79999999999998 L305.6 181.79999999999998 L303 179.39999999999998 L300.4 181.79999999999998 Z" fill="#f5973a"/><path d="M308.2 173.0 L308.2 179.2" stroke="#1e90e0" stroke-width="1.2"/><path d="M306.4 178.6 L308.2 181.39999999999998 L310 178.6 Z" fill="#1e90e0"/><path d="M316.4 172.79999999999998 L321.6 172.79999999999998 L321.6 181.79999999999998 L319 179.39999999999998 L316.4 181.79999999999998 Z" fill="#f5973a"/><path d="M324.2 175.2 L324.2 181.39999999999998" stroke="#1e90e0" stroke-width="1.2"/><path d="M322.4 175.79999999999998 L324.2 173.0 L326 175.79999999999998 Z" fill="#1e90e0"/><path d="M94 176.0 L98.4 176.0 L96.2 178.6 Z" fill="#e6e6e6"/><path d="M271.6 176.0 L276 176.0 L273.8 178.6 Z" fill="#e6e6e6"/><path d="M72 197.89999999999998 L75.4 197.89999999999998 L73.7 199.89999999999998 Z" fill="#e6e6e6"/><path d="M67.6 215.10000000000002 L72 215.10000000000002 L69.8 217.70000000000002 Z" fill="#e6e6e6"/><circle cx="86.9" cy="216.3" r="5.2" fill="#1e90e0"/><path d="M85.2 213.70000000000002 L89.6 216.3 L85.2 218.9 Z" fill="#fff"/><circle cx="104.1" cy="216.3" r="5.2" fill="#ea4426"/><rect x="102" y="214.20000000000002" width="4.2" height="4.2" rx="0.4" fill="#fff"/><circle cx="121.3" cy="216.3" r="5.2" fill="#9d9d9d"/><rect x="119.2" y="213.70000000000002" width="1.4" height="5.2" fill="#b9b9b9"/><rect x="122" y="213.70000000000002" width="1.4" height="5.2" fill="#b9b9b9"/><circle cx="138.6" cy="216.3" r="5.2" fill="#9d9d9d"/><path d="M136.4 213.9 L140 216.3 L136.4 218.70000000000002 Z" fill="#b9b9b9"/><rect x="140" y="213.9" width="1.2" height="4.8" fill="#b9b9b9"/><path d="M176.2 213.9 L179.8 213.9 L178 211.9 Z" fill="#e6e6e6"/><path d="M176.2 218.70000000000002 L179.8 218.70000000000002 L178 220.70000000000002 Z" fill="#e6e6e6"/><circle cx="194.8" cy="216.3" r="5.2" fill="#9d9d9d"/><path d="M193 213.9 L197.2 216.3 L193 218.70000000000002 Z" fill="#b4b4b4"/><rect x="192.6" y="218.5" width="4.8" height="0.8" fill="#b4b4b4"/><circle cx="211.5" cy="215.70000000000002" r="4.5" fill="#dcdcdc"/><rect x="208.8" y="215.10000000000002" width="5.4" height="1.3" fill="#4a4a4a"/><rect x="220" y="215.4" width="66" height="1.2" fill="#4a4a4a"/><rect x="253.6" y="212.70000000000002" width="0.8" height="6" fill="#4f4f4f"/><path d="M284.8 211.10000000000002 L290.4 211.10000000000002 L290.4 218.70000000000002 L287.6 221.70000000000002 L284.8 218.70000000000002 Z" fill="#e2e2e2"/><circle cx="298.4" cy="215.70000000000002" r="4.5" fill="#dcdcdc"/><rect x="295.7" y="215.10000000000002" width="5.4" height="1.3" fill="#4a4a4a"/><rect x="297.75" y="213.0" width="1.3" height="5.4" fill="#4a4a4a"/><path d="M127.9 233.275 L132.9 237.525 M132.9 233.275 L127.9 237.525" stroke="#f0f0f0" stroke-width="1.4"/><path d="M13.9 249.3 L18.7 249.3 L16.3 252.10000000000002 Z" fill="#e4e4e4"/><path d="M27.599999999999998 247.0 L30.999999999999996 247.0 L33.199999999999996 249.2 L33.199999999999996 254.0 L27.599999999999998 254.0 Z" fill="#f2f2f2"/><path d="M30.999999999999996 247.0 L30.999999999999996 249.2 L33.199999999999996 249.2 Z" fill="#c9c9c9"/><path d="M25.4 245.9 L28.4 245.9 L30.599999999999998 248.1 L30.599999999999998 252.3 L25.4 252.3 Z" fill="#dedede"/><path d="M28.4 245.9 L28.4 248.1 L30.599999999999998 248.1 Z" fill="#c9c9c9"/><circle cx="25.6" cy="246.5" r="1.8" fill="#f3df7a"/><path d="M37.0 257.59999999999997 L41.8 257.59999999999997 L44.0 259.79999999999995 L44.0 266.2 L37.0 266.2 Z" fill="#f4f4f4"/><path d="M41.8 257.59999999999997 L41.8 259.79999999999995 L44.0 259.79999999999995 Z" fill="#c9c9c9"/><circle cx="40.3" cy="262.5" r="1.9" fill="#4a4a4a"/><circle cx="40.3" cy="262.5" r="0.7" fill="#f4f4f4"/><path d="M26.400000000000002 273.29999999999995 L31.2 273.29999999999995 L28.8 276.09999999999997 Z" fill="#e4e4e4"/><path d="M36.199999999999996 270.09999999999997 L39.599999999999994 270.09999999999997 L40.4 271.09999999999997 L45.39999999999999 271.09999999999997 L45.39999999999999 277.7 L36.199999999999996 277.7 Z" fill="#e6cf8c"/><path d="M36.99999999999999 272.7 L45.8 272.7 L45.39999999999999 277.7 L36.199999999999996 277.7 Z" fill="#f7ebc0"/><path d="M39.3 283.5 L42.099999999999994 285.9 L39.3 288.29999999999995 Z" fill="#e4e4e4"/><path d="M48.199999999999996 282.09999999999997 L51.599999999999994 282.09999999999997 L52.4 283.09999999999997 L57.39999999999999 283.09999999999997 L57.39999999999999 289.7 L48.199999999999996 289.7 Z" fill="#e6cf8c"/><path d="M48.99999999999999 284.7 L57.8 284.7 L57.39999999999999 289.7 L48.199999999999996 289.7 Z" fill="#f7ebc0"/><path d="M48.199999999999996 294.09999999999997 L51.599999999999994 294.09999999999997 L52.4 295.09999999999997 L57.39999999999999 295.09999999999997 L57.39999999999999 301.7 L48.199999999999996 301.7 Z" fill="#e6cf8c"/><path d="M48.99999999999999 296.7 L57.8 296.7 L57.39999999999999 301.7 L48.199999999999996 301.7 Z" fill="#f7ebc0"/><path d="M26.400000000000002 309.2 L31.2 309.2 L28.8 312.0 Z" fill="#e4e4e4"/><path d="M36.199999999999996 306.0 L39.599999999999994 306.0 L40.4 307.0 L45.39999999999999 307.0 L45.39999999999999 313.6 L36.199999999999996 313.6 Z" fill="#e6cf8c"/><path d="M36.99999999999999 308.6 L45.8 308.6 L45.39999999999999 313.6 L36.199999999999996 313.6 Z" fill="#f7ebc0"/><path d="M49.400000000000006 317.7 L53.800000000000004 317.7 L56.00000000000001 319.9 L56.00000000000001 326.09999999999997 L49.400000000000006 326.09999999999997 Z" fill="#f4f4f4"/><path d="M53.800000000000004 317.7 L53.800000000000004 319.9 L56.00000000000001 319.9 Z" fill="#c9c9c9"/><rect x="50.6" y="320.29999999999995" width="4.2" height="0.6" fill="#9a9a9a"/><rect x="50.6" y="321.79999999999995" width="4.2" height="0.6" fill="#9a9a9a"/><rect x="50.6" y="323.29999999999995" width="4.2" height="0.6" fill="#9a9a9a"/><rect x="50.6" y="324.79999999999995" width="4.2" height="0.6" fill="#9a9a9a"/><path d="M190.1 234.56 L194.9 238.64 M194.9 234.56 L190.1 238.64" stroke="#f0f0f0" stroke-width="1.4"/><path d="M318 234.2 L323 234.2 L320.5 237 Z" fill="#e8e8e8"/><path d="M319.20000000000005 548.36 L324.0 552.4399999999999 M324.0 548.36 L319.20000000000005 552.4399999999999" stroke="#f0f0f0" stroke-width="1.4"/></svg>
<div style="left:333px;top:130px;width:952px;height:458px;background:#575757;"></div>
<div style="left:338px;top:133.4px;width:46.6px;height:14.6px;background:#555555;border:1px solid #4b4b4b;box-sizing:border-box;border-bottom:none;border-radius:1.5px 1.5px 0 0;"></div>
<div style="left:385.4px;top:133.4px;width:62.8px;height:14.6px;background:#555555;border:1px solid #4b4b4b;box-sizing:border-box;border-bottom:none;border-radius:1.5px 1.5px 0 0;"></div>
<div style="left:448.6px;top:131px;width:91.8px;height:17.4px;background:#5c5c5c;border:1px solid #4d4d4d;box-sizing:border-box;border-bottom:none;border-top:none;"></div>
<div class="t" style="top:136.30px;font-size:8.2px;line-height:12px;color:#c9c9c9;left:343.7px;">Graph</div>
<div class="t" style="top:136.30px;font-size:8.2px;line-height:12px;color:#c9c9c9;left:391px;">Monitoring</div>
<div class="t" style="top:134.80px;font-size:8.3px;line-height:12px;color:#f2f2f2;left:455px;">Motion Monitoring</div>
<div style="left:337px;top:148.2px;width:941px;height:19px;background:#5d5d5d;border:1px solid #4c4c4c;box-sizing:border-box;border-radius:2px;"></div>
<div style="left:337px;top:169px;width:941px;height:19.8px;background:#5d5d5d;border:1px solid #4c4c4c;box-sizing:border-box;border-radius:2px;"></div>
<div style="left:340.4px;top:152px;width:1.6px;height:12px;background:#555555;"></div>
<div style="left:340.4px;top:173px;width:1.6px;height:12px;background:#555555;"></div>
<div style="left:348px;top:150.6px;width:14.6px;height:14.6px;background:linear-gradient(#4f4f4f,#545454);"></div>
<div style="left:608px;top:150.6px;width:14.6px;height:14.6px;background:linear-gradient(#4f4f4f,#545454);"></div>
<div style="left:348px;top:171.6px;width:14.6px;height:14.6px;background:linear-gradient(#4f4f4f,#545454);"></div>
<div style="left:396px;top:171.6px;width:14.6px;height:14.6px;background:linear-gradient(#4f4f4f,#545454);"></div>
<div style="left:450px;top:171.6px;width:14.6px;height:14.6px;background:linear-gradient(#4f4f4f,#545454);"></div>
<svg style="left:333px;top:130px;" width="950" height="60" viewBox="333 130 950 60"><path d="M530.6 137.96 L535.4 142.04 M535.4 137.96 L530.6 142.04" stroke="#f0f0f0" stroke-width="1.4"/><path d="M1267.6 137.4 L1272.8 137.4 L1270.2 140.4 Z" fill="#ececec"/><path d="M353 153.1 L353 161.5 L355 159.7 L356.6 162.9 L357.8 162.29999999999998 L356.2 159.29999999999998 L358.8 159.1 Z" fill="#f2f2f2"/><path d="M370.2 153.9 A4.3 4.3 0 0 0 369.6 161.7" fill="none" stroke="#1e90e0" stroke-width="1.7"/><path d="M372.8 162.29999999999998 A4.3 4.3 0 0 0 373.4 154.5" fill="none" stroke="#1e90e0" stroke-width="1.7"/><path d="M368 163.0 L372.2 162.7 L369.8 159.7 Z" fill="#1e90e0"/><path d="M375 153.2 L370.8 153.5 L373.2 156.5 Z" fill="#1e90e0"/><path d="M393.3 158.1 L390.90000000000003 160.0 L390.90000000000003 156.2 Z" fill="#1e90e0"/><path d="M382.3 158.1 L384.7 156.2 L384.7 160.0 Z" fill="#1e90e0"/><path d="M387.8 163.6 L389.7 161.2 L385.90000000000003 161.2 Z" fill="#1e90e0"/><path d="M387.8 152.6 L385.90000000000003 155.0 L389.7 155.0 Z" fill="#1e90e0"/><path d="M384.40000000000003 158.1 L391.2 158.1 M387.8 154.7 L387.8 161.5" stroke="#1e90e0" stroke-width="0.9"/><circle cx="387.8" cy="158.1" r="1" fill="#5d5d5d"/><circle cx="402.4" cy="157.1" r="3.1" fill="#fff" stroke="#1e90e0" stroke-width="1.6"/><path d="M404.8 159.7 L407.8 162.7" stroke="#1e90e0" stroke-width="1.7"/><rect x="400.7" y="156.5" width="3.4" height="1.2" fill="#1c1c1c"/><rect x="401.8" y="155.4" width="1.2" height="3.4" fill="#1c1c1c"/><circle cx="418.59999999999997" cy="157.1" r="3.1" fill="#fff" stroke="#1e90e0" stroke-width="1.6"/><path d="M421.0 159.7 L424.0 162.7" stroke="#1e90e0" stroke-width="1.7"/><rect x="416.9" y="156.5" width="3.4" height="1.2" fill="#1c1c1c"/><rect x="431.1" y="153.7" width="8.8" height="8.8" fill="#c4c4c4"/><path d="M432.3 154.9 L438.7 161.29999999999998 M438.7 154.9 L432.3 161.29999999999998" stroke="#fff" stroke-width="2.2"/><circle cx="435.5" cy="158.1" r="1.9" fill="#fff"/><path d="M440.5 158.1 L438.1 159.6 L438.1 156.6 Z" fill="#1e90e0"/><path d="M430.5 158.1 L432.9 156.6 L432.9 159.6 Z" fill="#1e90e0"/><path d="M435.5 163.1 L437.0 160.7 L434.0 160.7 Z" fill="#1e90e0"/><path d="M435.5 153.1 L434.0 155.5 L437.0 155.5 Z" fill="#1e90e0"/><rect x="445.4" y="152.6" width="0.8" height="11" fill="#4f4f4f"/><path d="M452.6 155.1 L455.4 154.1 L460 159.7 L457 162.1 L454 159.1 L458.6 157.1" fill="none" stroke="#f0f0f0" stroke-width="0.9" stroke-dasharray="1.4 0.8"/><path d="M468.4 155.1 L471.6 153.9 L473.6 155.7" fill="none" stroke="#f0f0f0" stroke-width="1.1"/><circle cx="474.4" cy="159.7" r="3.2" fill="#1e90e0"/><rect x="482.2" y="152.6" width="0.8" height="11" fill="#4f4f4f"/><path d="M488.2 155.7 L490.59999999999997 153.29999999999998 L497.2 153.29999999999998 L497.2 159.89999999999998 L494.8 162.29999999999998 L488.2 162.29999999999998 Z" fill="#f2f2f2"/><rect x="488.2" y="155.7" width="6.6" height="6.6" fill="#1e90e0"/><path d="M504.2 155.7 L506.59999999999997 153.29999999999998 L513.1999999999999 153.29999999999998 L513.1999999999999 159.89999999999998 L510.8 162.29999999999998 L504.2 162.29999999999998 Z" fill="#f2f2f2"/><rect x="506.59999999999997" y="153.29999999999998" width="6.6" height="6" fill="#1e90e0"/><rect x="505.09999999999997" y="156.6" width="4.8" height="4.8" fill="#fff"/><path d="M520.1999999999999 155.7 L522.5999999999999 153.29999999999998 L529.1999999999999 153.29999999999998 L529.1999999999999 159.89999999999998 L526.8 162.29999999999998 L520.1999999999999 162.29999999999998 Z" fill="#f2f2f2"/><path d="M520.1999999999999 155.7 L522.5999999999999 153.29999999999998 L522.5999999999999 159.89999999999998 L520.1999999999999 162.29999999999998 Z" fill="#1e90e0"/><rect x="523.4" y="156.29999999999998" width="2.4" height="5" fill="#5d5d5d" opacity="0.55"/><path d="M536.1999999999999 155.7 L538.5999999999999 153.29999999999998 L545.1999999999999 153.29999999999998 L545.1999999999999 159.89999999999998 L542.8 162.29999999999998 L536.1999999999999 162.29999999999998 Z" fill="#f2f2f2"/><path d="M542.8 155.7 L545.1999999999999 153.29999999999998 L545.1999999999999 159.89999999999998 L542.8 162.29999999999998 Z" fill="#1e90e0"/><rect x="537.5999999999999" y="156.29999999999998" width="2.4" height="5" fill="#5d5d5d" opacity="0.55"/><path d="M552.4 155.7 L554.8 153.29999999999998 L561.4 153.29999999999998 L561.4 159.89999999999998 L559.0 162.29999999999998 L552.4 162.29999999999998 Z" fill="#f2f2f2"/><path d="M552.4 162.29999999999998 L554.8 159.89999999999998 L561.4 159.89999999999998 L559.0 162.29999999999998 Z" fill="#1e90e0"/><rect x="553.6" y="156.1" width="1.8" height="3.4" fill="#5d5d5d" opacity="0.55"/><rect x="556.4" y="156.1" width="1.8" height="3.4" fill="#5d5d5d" opacity="0.55"/><path d="M568.1999999999999 155.7 L570.5999999999999 153.29999999999998 L577.1999999999999 153.29999999999998 L577.1999999999999 159.89999999999998 L574.8 162.29999999999998 L568.1999999999999 162.29999999999998 Z" fill="#f2f2f2"/><path d="M568.1999999999999 155.7 L570.5999999999999 153.29999999999998 L577.1999999999999 153.29999999999998 L574.8 155.7 Z" fill="#1e90e0"/><rect x="569.4" y="157.29999999999998" width="1.8" height="4" fill="#5d5d5d" opacity="0.55"/><rect x="572.1999999999999" y="157.29999999999998" width="1.8" height="4" fill="#5d5d5d" opacity="0.55"/><path d="M584.0 155.7 L586.4 153.29999999999998 L593.0 153.29999999999998 L593.0 159.89999999999998 L590.6 162.29999999999998 L584.0 162.29999999999998 Z" fill="#f2f2f2"/><rect x="585.4" y="156.89999999999998" width="3.8" height="3.8" fill="none" stroke="#5d5d5d" stroke-width="0.8" opacity="0.7"/><circle cx="593.0" cy="153.29999999999998" r="0.9" fill="#1e90e0"/><path d="M595.8 157.29999999999998 L599.6 157.29999999999998 L597.7 159.5 Z" fill="#e8e8e8"/><rect x="605.2" y="152.6" width="0.8" height="11" fill="#4f4f4f"/><path d="M610.8 155.7 L613.1999999999999 153.29999999999998 L619.8 153.29999999999998 L619.8 159.89999999999998 L617.4 162.29999999999998 L610.8 162.29999999999998 Z" fill="#f2f2f2"/><rect x="612.0" y="156.7" width="4.2" height="4.6" fill="none" stroke="#5d5d5d" stroke-width="0.8" opacity="0.7"/><path d="M617.4 155.7 L619.8 153.29999999999998" stroke="#5d5d5d" stroke-width="0.6" opacity="0.7"/><path d="M626.8 155.7 L629.1999999999999 153.29999999999998 L635.8 153.29999999999998 L635.8 159.89999999999998 L633.4 162.29999999999998 L626.8 162.29999999999998 Z" fill="#f2f2f2"/><path d="M627.8 161.29999999999998 L632.4 156.7 L632.4 161.29999999999998 Z" fill="#5d5d5d" opacity="0.45"/><rect x="631.8" y="154.1" width="2.4" height="2.4" fill="#5d5d5d" opacity="0.45"/><path d="M352 179.9 L355.6 178.1 L359.2 178.3 L355.6 180.1 Z" fill="none" stroke="#f2f2f2" stroke-width="1"/><path d="M353.6 179.3 L358 178.8" stroke="#f2f2f2" stroke-width="0.8"/><ellipse cx="371.6" cy="175.8" rx="4.4" ry="1.5" fill="#f6f6f6"/><rect x="367.2" y="175.8" width="8.8" height="1.9" fill="#dcdcdc"/><ellipse cx="371.6" cy="177.7" rx="4.4" ry="1.2" fill="#dcdcdc"/><path d="M371.6 180 L368 181.8" stroke="#e02020" stroke-width="1.5"/><path d="M371.6 180 L375.2 181.8" stroke="#1ea51e" stroke-width="1.5"/><path d="M371.6 180 L371.6 183.6" stroke="#1a3fe0" stroke-width="1.6"/><path d="M384.6 182.6 Q385.4 177.4 390.6 176" fill="none" stroke="#4d4d4d" stroke-width="0.8"/><circle cx="384.4" cy="183" r="0.9" fill="#1e90e0"/><circle cx="391.2" cy="175.6" r="0.9" fill="#1e90e0"/><path d="M398.4 181.6 L401.2 181.2 L402.5 176 Q403.59999999999997 174.2 404.59999999999997 176 L405.7 181.2" fill="none" stroke="#f4f4f4" stroke-width="1.8" stroke-linejoin="round"/><path d="M404.4 180.2 L407.59999999999997 182.8 L405.79999999999995 184 L404.4 183.2 Z" fill="#e8f3fc"/><path d="M398.4 181.6 L401 181.3" stroke="#56aeea" stroke-width="1.8"/><path d="M414.4 181.6 L417.2 181.2 L418.5 176 Q419.59999999999997 174.2 420.59999999999997 176 L421.7 181.2" fill="none" stroke="#3aa0e6" stroke-width="1.8" stroke-linejoin="round"/><path d="M420.4 180.2 L423.59999999999997 182.8 L421.79999999999995 184 L420.4 183.2 Z" fill="#3aa0e6"/><path d="M430.59999999999997 176.6 L432.99999999999994 174.2 L439.59999999999997 174.2 L439.59999999999997 180.79999999999998 L437.2 183.2 L430.59999999999997 183.2 Z" fill="#f2f2f2"/><rect x="431.79999999999995" y="177.6" width="4.2" height="4.6" fill="none" stroke="#5d5d5d" stroke-width="0.8" opacity="0.7"/><path d="M437.2 176.6 L439.59999999999997 174.2" stroke="#5d5d5d" stroke-width="0.6" opacity="0.7"/><path d="M442.6 178.2 L446.4 178.2 L444.5 180.4 Z" fill="#e8e8e8"/><path d="M455 182.6 A3.4 3.4 0 1 1 460 182.6" fill="none" stroke="#1e90e0" stroke-width="1.5"/><path d="M457.5 176.4 L457.5 174" stroke="#1e90e0" stroke-width="1.3"/></svg>
<div style="left:335.6px;top:189.8px;width:943.6px;height:396px;background:#464646;"></div>
<div style="left:337px;top:191px;width:941px;height:394px;background:#c1c1c1;"></div>
<svg style="left:337px;top:191px;" width="941" height="394" viewBox="337 191 941 394"><path d="M782.10625 417.9 L807.25 403.31874999999997 L832.39375 417.9 L807.25 432.48125 Z" fill="#dedede"/><path d="M606.10 417.90 L807.25 301.25 M606.10 417.90 L807.25 534.55 M631.24 432.48 L832.39 315.83 M631.24 403.32 L832.39 519.97 M656.39 447.06 L857.54 330.41 M656.39 388.74 L857.54 505.39 M681.53 461.64 L882.68 344.99 M681.53 374.16 L882.68 490.81 M706.68 476.22 L907.83 359.57 M706.68 359.57 L907.83 476.22 M731.82 490.81 L932.97 374.16 M731.82 344.99 L932.97 461.64 M756.96 505.39 L958.11 388.74 M756.96 330.41 L958.11 447.06 M782.11 519.97 L983.26 403.32 M782.11 315.83 L983.26 432.48 M807.25 534.55 L1008.40 417.90 M807.25 301.25 L1008.40 417.90 " fill="none" stroke="#303030" stroke-width="0.85"/><defs><linearGradient id="rg" x1="0" x2="1"><stop offset="0" stop-color="#d9d9d9"/><stop offset="0.45" stop-color="#f6f6f6"/><stop offset="1" stop-color="#cfcfcf"/></linearGradient><linearGradient id="rg2" x1="0" x2="1"><stop offset="0" stop-color="#b4b4b4"/><stop offset="0.5" stop-color="#a2a2a2"/><stop offset="1" stop-color="#bdbdbd"/></linearGradient></defs><ellipse cx="807.6" cy="419" rx="6.6" ry="2.4" fill="#b4b4b4"/><path d="M801 420.4 L790 424.4" stroke="#cbcbcb" stroke-width="1.2"/><rect x="803.4" y="402.6" width="8" height="16.6" rx="3.8" fill="url(#rg)"/><ellipse cx="815.2" cy="404.6" rx="4.8" ry="5.4" fill="#e7e7e7"/><rect x="812.2" y="385" width="6.8" height="16" fill="url(#rg2)"/><ellipse cx="815.8" cy="380.8" rx="5" ry="6.8" fill="#d8d8d8"/><path d="M815.2 366 C811.4 371 807.6 377 807.8 383 C808 387.6 809 389.6 810.4 389.4" fill="none" stroke="url(#rg)" stroke-width="5" stroke-linecap="round"/><ellipse cx="807.9" cy="364.2" rx="3.1" ry="6.8" fill="#b0b0b0"/><ellipse cx="816.6" cy="361.2" rx="3.8" ry="4.8" fill="#d4d4d4"/><path d="M807.50 357.00 L813.55 353.80" stroke="#10881a" stroke-width="0.9"/><path d="M816.20 352.40 L814.14 354.92 L812.96 352.69 Z" fill="#10881a"/><path d="M807.50 357.00 L814.13 360.81" stroke="#ff1a1a" stroke-width="1.1"/><path d="M816.90 362.40 L813.46 361.97 L814.79 359.64 Z" fill="#ff1a1a"/><path d="M807.50 357.00 L807.50 349.40" stroke="#1414ff" stroke-width="1.0"/><path d="M807.50 346.20 L808.84 349.40 L806.16 349.40 Z" fill="#1414ff"/><path d="M812.40 415.00 L813.60 414.30" stroke="#10881a" stroke-width="0.9"/><path d="M816.20 412.80 L814.24 415.39 L812.97 413.21 Z" fill="#10881a"/><path d="M810.60 419.60 L814.32 421.46" stroke="#ff1a1a" stroke-width="1.1"/><path d="M817.00 422.80 L813.75 422.59 L814.88 420.33 Z" fill="#ff1a1a"/><path d="M431.00 546.80 L441.93 541.01" stroke="#17a317" stroke-width="2.2"/><path d="M444.40 539.70 L442.48 542.05 L441.38 539.97 Z" fill="#17a317"/><path d="M431.00 546.80 L444.44 555.03" stroke="#c81414" stroke-width="2.2"/><path d="M447.00 556.60 L443.78 556.11 L445.10 553.96 Z" fill="#c81414"/><path d="M431 547.6 L431 531.4" stroke="#1818b4" stroke-width="2.6"/><path d="M431 528.6 L429.2 532.2 L432.8 532.2 Z" fill="#1818b4"/><text x="428.2" y="528.6" font-size="9.4" font-style="italic" fill="#2a2ae0" font-family='"Liberation Sans", Arial, sans-serif'>Z</text><text x="444.8" y="534.8" font-size="9.4" font-style="italic" fill="#2fe02f" font-family='"Liberation Sans", Arial, sans-serif'>Y</text><text x="443.4" y="552.2" font-size="9.4" font-style="italic" fill="#e62222" font-family='"Liberation Sans", Arial, sans-serif'>X</text></svg>
<div style="left:333px;top:588px;width:950px;height:85px;background:#515151;"></div>
<div style="left:335.6px;top:591.6px;width:943.6px;height:81.4px;background:#555555;border:1px solid #4b4b4b;box-sizing:border-box;"></div>
<div class="t" style="top:593.90px;font-size:8.9px;line-height:12px;color:#909090;left:339.6px;font-weight:700;">Log</div>
<div style="left:336.6px;top:606px;width:941.6px;height:67px;background:#5e5e5e;border:1px solid #4e4e4e;box-sizing:border-box;"></div>
<div style="left:337.6px;top:607px;width:939.6px;height:14px;background:#5a5a5a;"></div>
<div style="left:337.6px;top:621px;width:939.6px;height:1px;background:#505050;"></div>
<div style="left:503px;top:607px;width:1px;height:14px;background:#4f4f4f;"></div>
<div class="t" style="top:609.30px;font-size:8.2px;line-height:12px;color:#ececec;left:340px;">Time</div>
<div class="t" style="top:609.30px;font-size:8.2px;line-height:12px;color:#ececec;left:506.5px;">Log</div>
<svg style="left:1255px;top:590px;" width="30" height="36" viewBox="0 0 30 36"><path d="M13.2 6.36 L18.0 10.440000000000001 M18.0 6.36 L13.2 10.440000000000001" stroke="#f0f0f0" stroke-width="1.4"/><path d="M13.6 25.2 L18 25.2 L15.8 22.8 Z" fill="#e8e8e8"/></svg>
<div style="left:2px;top:675px;width:1283px;height:20px;background:linear-gradient(#5a5a5a,#4b4b4b);"></div>
<div class="t" style="top:678.90px;font-size:8.2px;line-height:12px;color:#ececec;left:10px;">[Alarm Message]</div>
<div style="left:945px;top:679px;width:1px;height:12px;background:#4d4d4d;"></div>
<div style="left:1010.4px;top:679px;width:1px;height:12px;background:#4d4d4d;"></div>
<div style="left:1117.8px;top:679px;width:1px;height:12px;background:#4d4d4d;"></div>
<div style="left:1174.4px;top:679px;width:1px;height:12px;background:#4d4d4d;"></div>
<div style="left:1233.5px;top:679px;width:1px;height:12px;background:#4d4d4d;"></div>
<svg style="left:940px;top:676px;" width="340" height="18" viewBox="940 676 340 18"><path d="M952.4 678.6 L958.6 678.6 L958.6 688 L952.4 688 Z" fill="#a9a9a9"/><rect x="953.8" y="680" width="3.4" height="0.8" fill="#777"/><rect x="953.2" y="686" width="4.4" height="0.8" fill="#eee"/><circle cx="959.6" cy="686.2" r="2.5" fill="#4aae4f" stroke="#8f8f8f" stroke-width="0.7"/><path d="M958.4 686.325 L959.3000000000001 687.25 L960.85 685.3000000000001" fill="none" stroke="#fff" stroke-width="0.75"/><circle cx="1127.8" cy="680.8" r="2.4" fill="#f1dfae"/><path d="M1126.8 682.6 L1129 682.6 L1128.8 688 L1127.6 688.4 Z" fill="#f1dfae"/><path d="M1126.6 682.8 L1124.8 687.2 L1126 687.6 Z" fill="#e9d39a"/><circle cx="1132.4" cy="686.2" r="2.5" fill="#4aae4f" stroke="#8f8f8f" stroke-width="0.7"/><path d="M1131.2 686.325 L1132.1000000000001 687.25 L1133.65 685.3000000000001" fill="none" stroke="#fff" stroke-width="0.75"/><rect x="1180.4" y="678.6" width="9.8" height="9.6" rx="1.2" fill="#ea5530"/><text x="1185.3" y="685.2" font-size="4.8" font-weight="700" text-anchor="middle" fill="#fff" font-family='"Liberation Sans", Arial, sans-serif'>SO</text><rect x="1239.4" y="678.8" width="9.4" height="9.2" fill="#fbfbfb"/><rect x="1239.4" y="678.8" width="9.4" height="1.4" fill="#a6a6a6"/><path d="M1243 681.4 l1.6 -0.4 l1.2 1 l-0.8 1.6 l0.8 3 l-2.8 0 l0.6 -2.8 Z" fill="#8fc6ec"/></svg>
<div class="t" style="top:678.90px;font-size:8.2px;line-height:12px;color:#ececec;left:966px;">Connected</div>
<div class="t" style="top:678.90px;font-size:8.2px;line-height:12px;color:#ececec;left:1016.9px;">M0609 - XXXXXX-MXXXX</div>
<div class="t" style="top:678.90px;font-size:8.2px;line-height:12px;color:#ececec;left:1138px;">Enabled</div>
<div class="t" style="top:678.90px;font-size:8.2px;line-height:12px;color:#ececec;left:1194.4px;letter-spacing:-0.2px;">Servo Off</div>
<div class="t" style="top:678.90px;font-size:8.2px;line-height:12px;color:#ececec;left:1251.9px;">Virtual</div>
<svg style="left:1179.7px;top:18.2px;" width="35.6" height="35.6" viewBox="1179.7 18.2 35.6 35.6"><circle cx="1197.5" cy="36.0" r="16.35" fill="#8faadc" stroke="#34599c" stroke-width="0.9"/><text x="1197.5" y="44.85" font-size="22.5" text-anchor="middle" fill="#363636" font-family='"NanumGothic", "Liberation Sans", sans-serif'>1</text></svg>
<svg style="left:1179.7px;top:102.0px;" width="35.6" height="35.6" viewBox="1179.7 102.0 35.6 35.6"><circle cx="1197.5" cy="119.8" r="16.35" fill="#8faadc" stroke="#34599c" stroke-width="0.9"/><text x="1197.5" y="128.65" font-size="22.5" text-anchor="middle" fill="#363636" font-family='"NanumGothic", "Liberation Sans", sans-serif'>2</text></svg>
<svg style="left:20.599999999999998px;top:619.0px;" width="35.6" height="35.6" viewBox="20.599999999999998 619.0 35.6 35.6"><circle cx="38.4" cy="636.8" r="16.35" fill="#8faadc" stroke="#34599c" stroke-width="0.9"/><text x="38.4" y="645.65" font-size="22.5" text-anchor="middle" fill="#363636" font-family='"NanumGothic", "Liberation Sans", sans-serif'>3</text></svg>
<svg style="left:1218.2px;top:519.2px;" width="35.6" height="35.6" viewBox="1218.2 519.2 35.6 35.6"><circle cx="1236" cy="537" r="16.35" fill="#8faadc" stroke="#34599c" stroke-width="0.9"/><text x="1236" y="545.85" font-size="22.5" text-anchor="middle" fill="#363636" font-family='"NanumGothic", "Liberation Sans", sans-serif'>4</text></svg>
<svg style="left:1216.2px;top:634.2px;" width="35.6" height="35.6" viewBox="1216.2 634.2 35.6 35.6"><circle cx="1234" cy="652" r="16.35" fill="#8faadc" stroke="#34599c" stroke-width="0.9"/><text x="1234" y="660.85" font-size="22.5" text-anchor="middle" fill="#363636" font-family='"NanumGothic", "Liberation Sans", sans-serif'>5</text></svg>
<div style="left:0px;top:696px;width:1285px;height:7px;background:#ffffff;"></div>
<div style="left:1283px;top:588px;width:2px;height:84px;background:#ffffff;"></div>
<div style="left:1283px;top:696px;width:1px;height:7px;background:#cfcfcf;"></div>
<div class="red" style="left:2px;top:0px;width:1283px;height:2px;"></div>
<div class="red" style="left:2px;top:0px;width:3px;height:696px;"></div>
<div class="red" style="left:1282px;top:0px;width:3px;height:588px;"></div>
<div class="red" style="left:1280px;top:588px;width:3px;height:84px;"></div>
<div class="red" style="left:1282px;top:672px;width:3px;height:24px;"></div>
<div class="red" style="left:2px;top:98px;width:1283px;height:4px;"></div>
<div class="red" style="left:2px;top:128px;width:1283px;height:3px;"></div>
<div class="red" style="left:330px;top:128px;width:5px;height:460px;"></div>
<div class="red" style="left:330px;top:588px;width:3px;height:84px;"></div>
<div class="red" style="left:333px;top:585px;width:952px;height:3px;"></div>
<div class="red" style="left:2px;top:672px;width:1283px;height:5px;"></div>
<div class="red" style="left:2px;top:693px;width:1283px;height:3px;"></div>
<svg style="left:117.7px;top:680.0px;" width="35.6" height="35.6" viewBox="117.7 680.0 35.6 35.6"><circle cx="135.5" cy="697.8" r="16.35" fill="#8faadc" stroke="#34599c" stroke-width="0.9"/><text x="135.5" y="706.65" font-size="22.5" text-anchor="middle" fill="#363636" font-family='"NanumGothic", "Liberation Sans", sans-serif'>6</text></svg>
</div></body></html>
